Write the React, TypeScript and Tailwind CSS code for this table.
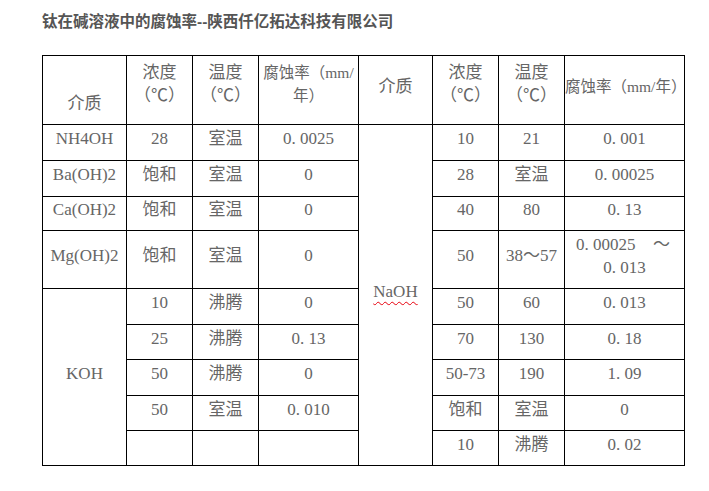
const font = {
  fontFamily: '"Liberation Serif", "Noto Sans CJK SC", serif',
};

type Cell = {
  text?: React.ReactNode;
  rowSpan?: number;
};

const rowHeights = [36, 36, 34, 58, 36, 35, 36, 35, 35];

// left block (介质, 浓度, 温度, 腐蚀率)
const leftRows: Cell[][] = [
  [{ text: "NH4OH" }, { text: "28" }, { text: "室温" }, { text: "0. 0025" }],
  [{ text: "Ba(OH)2" }, { text: "饱和" }, { text: "室温" }, { text: "0" }],
  [{ text: "Ca(OH)2" }, { text: "饱和" }, { text: "室温" }, { text: "0" }],
  [{ text: "Mg(OH)2" }, { text: "饱和" }, { text: "室温" }, { text: "0" }],
  [{ text: "KOH", rowSpan: 5 }, { text: "10" }, { text: "沸腾" }, { text: "0" }],
  [{ text: "25" }, { text: "沸腾" }, { text: "0. 13" }],
  [{ text: "50" }, { text: "沸腾" }, { text: "0" }],
  [{ text: "50" }, { text: "室温" }, { text: "0. 010" }],
  [{}, {}, {}],
];

const rightRows: Cell[][] = [
  [{ text: "10" }, { text: "21" }, { text: "0. 001" }],
  [{ text: "28" }, { text: "室温" }, { text: "0. 00025" }],
  [{ text: "40" }, { text: "80" }, { text: "0. 13" }],
  [
    { text: "50" },
    { text: "38～57" },
    {
      text: (
        <>
          <span className="flex justify-between pl-[11px] pr-[14px]">
            <span>0. 00025</span>
            <span>～</span>
          </span>
          <span className="block">0. 013</span>
        </>
      ),
    },
  ],
  [{ text: "50" }, { text: "60" }, { text: "0. 013" }],
  [{ text: "70" }, { text: "130" }, { text: "0. 18" }],
  [{ text: "50-73" }, { text: "190" }, { text: "1. 09" }],
  [{ text: "饱和" }, { text: "室温" }, { text: "0" }],
  [{ text: "10" }, { text: "沸腾" }, { text: "0. 02" }],
];

function Td({ cell }: { cell: Cell }) {
  return (
    <td
      rowSpan={cell.rowSpan}
      className="border-[1.5px] border-black text-center align-middle pb-2 px-0 leading-[23px] whitespace-pre"
    >
      {cell.text}
    </td>
  );
}

export default function App() {
  return (
    <div className="w-[709px] h-[491px] bg-white pl-[42px] pt-[11px]" style={font}>
      <h1
        className="text-[15.5px] font-bold text-[#555] leading-[22px]"
        style={{ fontFamily: '"Liberation Sans", "Noto Sans CJK SC", sans-serif' }}
      >
        钛在碱溶液中的腐蚀率--陕西仟亿拓达科技有限公司
      </h1>

      <table className="mt-[22px] border-collapse table-fixed w-[642px] text-[17px] text-[#666]">
        <colgroup>
          <col className="w-[84px]" />
          <col className="w-[66px]" />
          <col className="w-[66px]" />
          <col className="w-[100px]" />
          <col className="w-[74px]" />
          <col className="w-[66px]" />
          <col className="w-[66px]" />
          <col className="w-[120px]" />
        </colgroup>
        <tbody>
          <tr className="h-[69px]">
            <td className="border-[1.5px] border-black text-center align-bottom pb-[9px] leading-[23px]">
              介质
            </td>
            <td className="border-[1.5px] border-black text-center align-middle pb-3 leading-[23px]">
              浓度
              <br />
              （℃）
            </td>
            <td className="border-[1.5px] border-black text-center align-middle pb-3 leading-[23px]">
              温度
              <br />
              （℃）
            </td>
            <td className="border-[1.5px] border-black text-center align-middle pb-3 leading-[23px] text-[15.5px] whitespace-nowrap">
              腐蚀率（mm/
              <br />
              年）
            </td>
            <td className="border-[1.5px] border-black text-center align-middle pb-2 leading-[23px]">
              介质
            </td>
            <td className="border-[1.5px] border-black text-center align-middle pb-3 leading-[23px]">
              浓度
              <br />
              （℃）
            </td>
            <td className="border-[1.5px] border-black text-center align-middle pb-3 leading-[23px]">
              温度
              <br />
              （℃）
            </td>
            <td className="border-[1.5px] border-black text-center align-middle pb-2 leading-[23px] text-[15.5px] whitespace-nowrap">
              腐蚀率（mm/年）
            </td>
          </tr>
          {rowHeights.map((h, i) => (
            <tr key={i} style={{ height: h }}>
              {leftRows[i].map((c, j) => (
                <Td key={"l" + j} cell={c} />
              ))}
              {i === 0 && (
                <td
                  rowSpan={9}
                  className="border-[1.5px] border-black text-center align-middle pb-2 leading-[23px]"
                >
                  <span className="underline decoration-wavy decoration-red-600 decoration-1 underline-offset-4">
                    NaOH
                  </span>
                </td>
              )}
              {rightRows[i].map((c, j) => (
                <Td key={"r" + j} cell={c} />
              ))}
            </tr>
          ))}
        </tbody>
      </table>
    </div>
  );
}
